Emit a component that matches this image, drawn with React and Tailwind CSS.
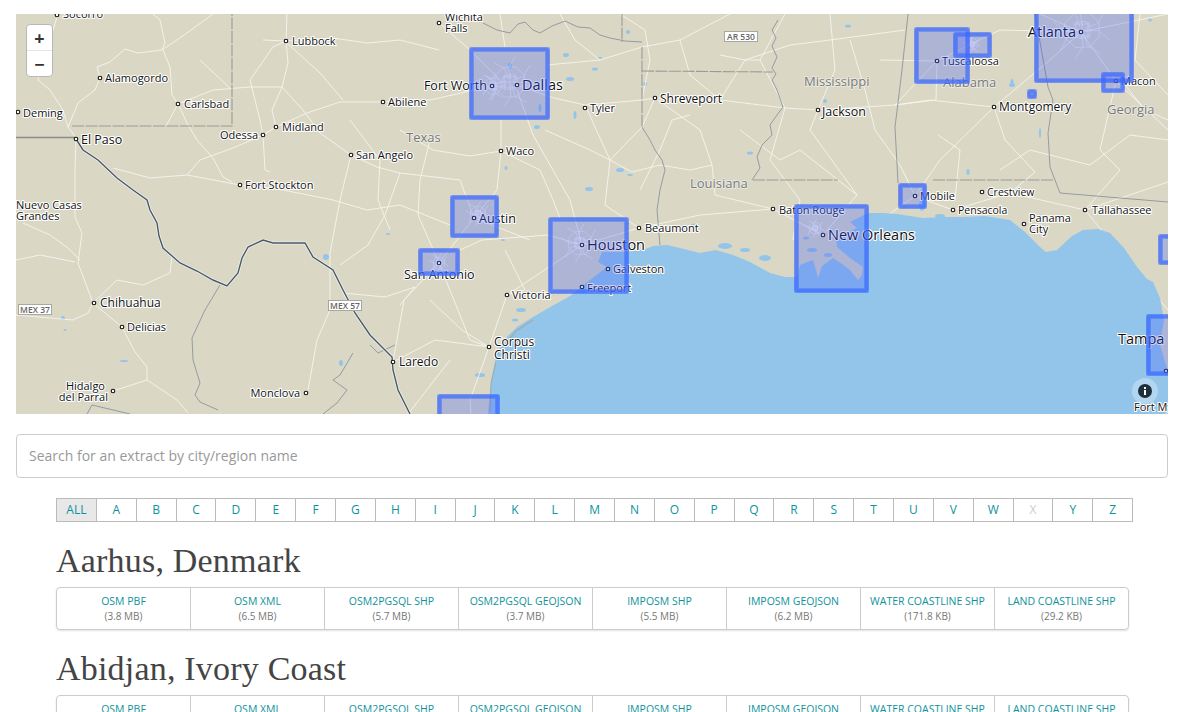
import React from 'react';

const FONT = '"Open Sans", "Liberation Sans", sans-serif';

// map coordinates below are page pixels, viewBox is shifted to match
const GULF =
  'M488,414 L491,380 L497,352 L506,338 L517,327 L533,317 L552,306 L570,296 L590,280 L607,267 L598,262 L602,252 L623,252 L643,250 L653,246 L667,245 L684,249 L700,253 L716,250 L733,255 L750,262 L770,273 L785,277 L797,277 L800,265 L813,260 L816,270 L818,278 L822,266 L833,258 L842,264 L850,270 L858,280 L862,275 L863,267 L850,258 L837,247 L836,238 L857,228 L850,222 L868,213 L883,213 L897,214 L923,218 L945,217 L963,217 L985,216 L1010,220 L1025,232 L1040,247 L1046,252 L1057,250 L1072,236 L1083,230 L1098,229 L1110,233 L1124,248 L1137,267 L1147,279 L1153,282 L1160,298 L1164,320 L1160,345 L1168,372 L1168,414 Z';

const ROADS = [
  'M57,17 L53,30 L38,80 L50,90 L63,110 L68,127 L76,138',
  'M100,78 L97,67 L110,62 L125,49 L138,53 L162,50 L165,43 L160,20 L153,14',
  'M100,78 L95,90 L78,103 L68,127',
  'M162,50 L187,33 L213,14',
  'M163,50 L170,67 L172,95 L178,104 L187,123 L197,140 L213,158 L223,177 L232,182',
  'M178,104 L213,90 L250,87 L282,87',
  'M178,104 L166,126',
  'M250,80 L273,47 L286,41 L287,14',
  'M263,40 L286,41 L333,38 L367,43 L400,40 L439,50',
  'M286,41 L288,63 L282,87 L272,110 L276,127',
  'M287,43 L320,73 L343,100',
  'M250,80 L260,120 L263,135 L265,170 L270,172',
  'M187,175 L200,160 L233,148 L263,135 L276,127 L307,113 L340,102 L383,102 L430,100 L492,86',
  'M113,168 L150,178 L187,175 L240,185 L283,190 L333,200 L367,210 L400,205 L450,225',
  'M282,87 L303,110 L320,133 L351,155 L377,167 L400,173 L460,180 L474,218',
  'M351,155 L340,200 L330,253 L330,310 L317,340 L308,390',
  'M76,139 L75,170 L75,217 L82,233 L78,263 L93,303',
  'M93,303 L117,280 L143,285 L170,273 L172,257',
  'M16,315 L73,320 L88,313 L93,303 L122,327 L135,352 L147,367 L147,380 L177,400 L188,413',
  'M113,391 L147,380',
  'M23,223 L50,235 L68,248 L80,260',
  'M343,293 L385,297 L415,287 L400,305',
  'M517,85 L550,97 L585,105 L642,100 L655,98 L720,100 L785,108 L818,110 L895,105 L930,100 L994,107',
  'M505,47 L500,14',
  'M547,65 L600,60 L642,47 L680,40 L730,14',
  'M501,120 L501,151 L497,190 L474,218 L439,263 L404,300 L393,362',
  'M439,23 L470,50 L500,80',
  'M460,250 L482,240 L548,235 L582,245',
  'M582,245 L639,228 L700,215 L773,209 L823,235',
  'M474,218 L530,240',
  'M582,245 L570,200 L533,135 L517,90',
  'M489,347 L470,340 L439,263',
  'M489,347 L507,295 L582,245',
  'M393,362 L435,340 L489,347 L470,400 L471,414',
  'M655,98 L700,130 L712,165 L715,195 L773,209',
  'M585,105 L610,160 L605,205 L639,228',
  'M655,98 L642,127 L610,160',
  'M818,110 L810,130 L857,195 L823,235',
  'M818,110 L835,70 L830,14',
  'M895,105 L937,61 L1000,30 L1081,32',
  'M994,107 L940,160 L915,196 L860,235',
  'M994,107 L1050,60 L1081,32',
  'M915,196 L953,210 L1010,193 L1085,210 L1168,182',
  'M1081,32 L1116,81 L1100,150 L1120,170 L1085,210',
  'M1116,81 L1168,130',
  'M1085,210 L1130,265 L1168,310',
  'M1081,32 L1168,14',
  'M1081,32 L1040,14',
  'M994,107 L1005,140 L1035,172 L1010,193',
  'M880,60 L937,61 L936,100 L895,105',
  'M760,60 L785,108 L770,160 L800,200 L793,240',
  'M720,100 L745,60 L790,45 L830,40 L905,30',
  'M720,55 L745,60 L760,60 L785,14',
  'M1125,85 L1145,110 L1168,120',
  'M955,200 L960,150 L938,135',
  'M400,130 L433,150 L470,156 L501,151 L540,170 L553,200 L560,218',
  'M610,160 L632,172 L660,165 L690,170 L712,165',
  'M545,130 L590,150 L610,160',
  'M620,14 L645,30 L650,60 L642,100',
  'M680,40 L690,75 L720,100',
  'M690,115 L672,120 L660,150 L640,190',
  'M740,130 L780,160 L800,150 L857,195',
  'M850,40 L865,90 L875,130 L900,165 L915,196',
  'M1000,170 L1030,150 L1090,165 L1130,135 L1168,140',
  'M1140,14 L1135,60 L1168,95',
  'M560,14 L575,40 L600,60',
  'M430,140 L420,180 L418,215 L439,263',
  'M400,173 L385,215 L368,245 L340,265',
  'M430,300 L462,330 L489,347',
  'M505,250 L525,290 L507,295',
  'M408,414 L450,360',
  'M16,260 L40,255 L75,262',
  'M200,60 L232,90',
  'M350,120 L380,160 L378,200 L390,230',
];

const BORDERS_DASHED = [
  'M72,126 L232,126 L232,14',
  'M622,14 L622,42',
  'M642,47 L642,127',
  'M642,71 L773,72',
  'M753,180 L838,180',
  'M933,180 L1053,180',
];

const BORDERS_THIN = [
  'M483,23 L497,30 L510,33 L518,24 L525,22 L533,30 L540,33 L552,26 L565,21 L578,27 L590,28 L600,35 L610,38 L625,41 L642,42',
  'M642,127 L650,140 L655,150 L662,160 L665,170 L660,190 L657,210 L660,245',
  'M778,20 L772,30 L776,38 L772,46 L777,57 L772,68 L776,74 L772,80 L777,90 L783,107 L777,115 L770,125 L772,135 L762,145 L757,157 L760,168 L752,180',
  'M908,14 L902,70 L895,127 L898,183',
  'M1035,14 L1048,87 L1053,100 L1048,133 L1050,167 L1060,193 L1168,202',
  'M220,285 L205,310 L192,338 L193,360 L200,383 L195,395 L200,402 L218,410',
  'M87,414 L92,405 L130,414',
  'M353,353 L340,375 L333,380 L347,390 L337,403 L323,414',
  'M370,345 L378,353 L395,345',
];

const RIO =
  'M76,139 L83,150 L98,160 L117,178 L133,190 L147,200 L150,210 L157,223 L159,236 L163,248 L180,263 L197,271 L213,280 L227,286 L238,273 L242,258 L248,247 L263,240 L273,243 L290,243 L305,243 L313,257 L333,270 L343,290 L355,313 L370,335 L392,357 L393,370 L398,390 L410,414';

const LAKES = [
  [63, 318, 2, 2], [124, 361, 4, 1], [341, 363, 2, 3], [326, 257, 3, 3], [65, 330, 1.5, 1],
  [566, 55, 3, 2], [595, 69, 3, 1.5], [570, 79, 4, 2], [575, 115, 1.5, 4], [620, 170, 4, 2], [630, 175, 3, 1],
  [589, 189, 4, 2], [628, 32, 2, 2], [510, 66, 2, 3], [540, 108, 1.5, 4], [537, 127, 3, 2], [506, 168, 1.5, 2],
  [645, 84, 2, 2], [750, 153, 3, 1.5], [695, 225, 4, 1.5], [725, 246, 7, 3], [745, 250, 5, 2], [765, 258, 6, 3],
  [1012, 85, 3, 2], [1012, 82, 1.5, 3], [825, 101, 2, 2], [848, 26, 3, 1.5], [968, 172, 1.5, 3], [1150, 20, 2, 1.5],
  [1040, 133, 1, 5], [922, 205, 3, 6], [940, 216, 5, 2], [600, 58, 2, 1], [503, 240, 2, 1],
  [521, 310, 5, 2], [515, 320, 3, 1.5], [504, 345, 5, 2], [480, 375, 5, 2], [388, 234, 2, 1],
  [812, 250, 5, 2], [828, 255, 4, 2], [806, 238, 3, 1.5],
];

const LABELS = [
  { d: [57, 15], t: 'Socorro', x: 63, y: 18 },
  { d: [286, 41], t: 'Lubbock', x: 292, y: 45 },
  { d: [100, 78], t: 'Alamogordo', x: 105, y: 82 },
  { d: [178, 104], t: 'Carlsbad', x: 184, y: 108 },
  { d: [18, 112], t: 'Deming', x: 23, y: 117 },
  { d: [76, 139], t: 'El Paso', x: 81, y: 144, s: 12.5 },
  { d: [263, 135], t: 'Odessa', x: 258, y: 139, end: true },
  { d: [276, 127], t: 'Midland', x: 282, y: 131 },
  { d: [383, 102], t: 'Abilene', x: 388, y: 106 },
  { d: [351, 155], t: 'San Angelo', x: 356, y: 159 },
  { d: [240, 185], t: 'Fort Stockton', x: 245, y: 189 },
  { t: 'Nuevo Casas', x: 16, y: 209 },
  { t: 'Grandes', x: 16, y: 220 },
  { d: [94, 303], t: 'Chihuahua', x: 100, y: 307, s: 12 },
  { d: [122, 327], t: 'Delicias', x: 127, y: 331 },
  { t: 'Hidalgo', x: 105, y: 390, end: true },
  { d: [113, 391], t: 'del Parral', x: 108, y: 401, end: true },
  { d: [306, 393], t: 'Monclova', x: 300, y: 397, end: true },
  { d: [393, 362], t: 'Laredo', x: 399, y: 366, s: 12 },
  { d: [439, 23], t: 'Wichita', x: 445, y: 21 },
  { t: 'Falls', x: 445, y: 32 },
  { d: [492, 86], t: 'Fort Worth', x: 487, y: 90, end: true, s: 12.5 },
  { d: [517, 85], t: 'Dallas', x: 522, y: 90, s: 14.5 },
  { d: [585, 108], t: 'Tyler', x: 590, y: 112 },
  { d: [655, 98], t: 'Shreveport', x: 660, y: 103, s: 12 },
  { d: [501, 151], t: 'Waco', x: 506, y: 155 },
  { d: [818, 110], t: 'Jackson', x: 822, y: 116, s: 12.5 },
  { d: [937, 61], t: 'Tuscaloosa', x: 942, y: 65 },
  { d: [994, 107], t: 'Montgomery', x: 999, y: 111, s: 12 },
  { d: [1081, 32], t: 'Atlanta', x: 1076, y: 37, end: true, s: 14.5 },
  { d: [1116, 81], t: 'Macon', x: 1121, y: 85 },
  { d: [915, 196], t: 'Mobile', x: 920, y: 200 },
  { d: [982, 192], t: 'Crestview', x: 987, y: 196, s: 10.5 },
  { d: [953, 210], t: 'Pensacola', x: 958, y: 214, s: 10.5 },
  { d: [1085, 210], t: 'Tallahassee', x: 1092, y: 214 },
  { d: [1024, 224], t: 'Panama', x: 1029, y: 222 },
  { t: 'City', x: 1029, y: 233 },
  { d: [773, 209], t: 'Baton Rouge', x: 779, y: 214 },
  { d: [639, 228], t: 'Beaumont', x: 645, y: 232 },
  { d: [474, 218], t: 'Austin', x: 479, y: 223, s: 12.5 },
  { d: [439, 263], t: 'San Antonio', x: 404, y: 279, s: 12.5 },
  { d: [582, 245], t: 'Houston', x: 587, y: 250, s: 14.5 },
  { d: [608, 269], t: 'Galveston', x: 613, y: 273 },
  { d: [582, 287], t: 'Freeport', x: 587, y: 292 },
  { d: [507, 295], t: 'Victoria', x: 512, y: 299 },
  { d: [489, 347], t: 'Corpus', x: 494, y: 346, s: 12 },
  { t: 'Christi', x: 494, y: 359, s: 12 },
  { d: [823, 235], t: 'New Orleans', x: 828, y: 240, s: 14.5 },
  { t: 'Tampa', x: 1118, y: 344, s: 14.5 },
  { d: [1166, 371], t: 'Fort Myers', x: 1134, y: 411, s: 11 },
];

const STATES = [
  ['Texas', 406, 142],
  ['Louisiana', 690, 188],
  ['Mississippi', 804, 86],
  ['Alabama', 943, 87],
  ['Georgia', 1107, 114],
];

const SHIELDS = [
  ['AR 530', 724, 31, 33],
  ['MEX 37', 18, 304, 33],
  ['MEX 57', 328, 300, 33],
];

// outer edges of each extract box: left, top, right, bottom
const BOXES = [
  [469, 47, 550, 120],
  [450, 195, 499, 238],
  [548, 217, 629, 294],
  [418, 248, 460, 276],
  [437, 394, 500, 420],
  [794, 204, 869, 293],
  [898, 183, 927, 209],
  [914, 27, 970, 84],
  [953, 32, 992, 58],
  [1034, 8, 1134, 83],
  [1101, 72, 1125, 93],
  [1027, 89, 1037, 99],
  [1146, 314, 1180, 376],
  [1158, 234, 1180, 265],
];

// street tangles: centre x, centre y, radius
const CITIES = [
  [510, 82, 26], [493, 86, 14], [580, 243, 20], [439, 263, 10], [478, 214, 13], [1082, 30, 30], [972, 44, 10], [815, 228, 10],
];

function cityPath(cx, cy, r) {
  const at = (deg, k) => {
    const a = (deg * Math.PI) / 180;
    return `${(cx + Math.cos(a) * r * k).toFixed(1)},${(cy + Math.sin(a) * r * k).toFixed(1)}`;
  };
  const spokes = [12, 58, 96, 142, 188, 236, 274, 326]
    .map((deg, i) => `M${at(deg, 0.12)} L${at(deg + (i % 2 ? 12 : -10), 0.55)} L${at(deg + (i % 2 ? -6 : 8), 1)}`)
    .join(' ');
  const ring = (k) => `M${[0, 45, 90, 135, 180, 225, 270, 315].map((deg) => at(deg + 20, k)).join(' L')} Z`;
  const grid = [-0.2, 0, 0.2]
    .map((k) => `M${cx - r * 0.3},${cy + r * k} H${cx + r * 0.3} M${cx + r * k},${cy - r * 0.3} V${cy + r * 0.3}`)
    .join(' ');
  return `${spokes} ${ring(0.3)} ${ring(0.62)} ${grid}`;
}

function MapSvg() {
  return (
    <svg viewBox="16 14 1152 400" className="block w-full h-full" style={{ fontFamily: FONT }}>
      <rect x="16" y="14" width="1152" height="400" fill="#dad7c4" />
      <g fill="#93c5ea">
        {LAKES.map(([cx, cy, rx, ry], i) => (
          <ellipse key={i} cx={cx} cy={cy} rx={rx} ry={ry} />
        ))}
      </g>
      <g fill="none" stroke="#f6f5ee" strokeWidth="0.9" strokeLinejoin="round">
        {ROADS.map((d, i) => (
          <path key={i} d={d} />
        ))}
      </g>
      <path d={GULF} fill="#93c5ea" />
      <path d="M497,355 L516,331 L533,320" fill="none" stroke="#a5a9a6" strokeWidth="1.2" />
      <path d="M490,412 L491,384 L496,362" fill="none" stroke="#a5a9a6" strokeWidth="1" />
      <g fill="none" stroke="#9a9b96" strokeWidth="1.1" strokeDasharray="12 1.5">
        {BORDERS_DASHED.map((d, i) => (
          <path key={i} d={d} />
        ))}
      </g>
      <g fill="none" stroke="#8c959c" strokeWidth="0.9">
        {BORDERS_THIN.map((d, i) => (
          <path key={i} d={d} />
        ))}
      </g>
      <path d="M16,137.5 L76,137.5" fill="none" stroke="#8b8d8c" strokeWidth="1.6" />
      <path d={RIO} fill="none" stroke="#f0efe6" strokeWidth="3" />
      <path d={RIO} fill="none" stroke="#47596b" strokeWidth="1.4" />
      <g fill="none" stroke="#fbfbff" strokeWidth="0.6" opacity="0.9">
        {CITIES.map(([cx, cy, r], i) => (
          <path key={i} d={cityPath(cx, cy, r)} />
        ))}
      </g>
      {STATES.map(([t, x, y]) => (
        <text key={t} x={x} y={y} fontSize="13" fill="#77787a" stroke="#eeede4" strokeWidth="1.5" paintOrder="stroke">
          {t}
        </text>
      ))}
      {SHIELDS.map(([t, x, y, w]) => (
        <g key={t}>
          <rect x={x + 0.5} y={y + 0.5} width={w} height="10" fill="#fff" stroke="#a8a8a0" />
          <text x={x + w / 2 + 0.5} y={y + 9} textAnchor="middle" fontSize="8.5" fontWeight="600" fill="#666">
            {t}
          </text>
        </g>
      ))}
      {LABELS.map((l) => (
        <g key={l.t}>
          {l.d && <circle cx={l.d[0]} cy={l.d[1]} r="1.8" fill="#fff" stroke="#111" strokeWidth="1.1" />}
          <text
            x={l.x}
            y={l.y}
            fontSize={l.s || 11}
            fontWeight="500"
            textAnchor={l.end ? 'end' : 'start'}
            fill="#111"
            stroke="#fff"
            strokeWidth="2.2"
            strokeLinejoin="round"
            paintOrder="stroke"
          >
            {l.t}
          </text>
        </g>
      ))}
      {BOXES.map(([l, t, r, b]) => (
        <g key={`${l}-${t}`}>
          <rect x={l} y={t} width={r - l} height={b - t} rx="1.5" fill="#3c5aff" fillOpacity="0.28" />
          <rect x={l + 2.5} y={t + 2.5} width={r - l - 5} height={b - t - 5} rx="1" fill="none" stroke="#3a6bff" strokeOpacity="0.45" strokeWidth="5" />
          <rect x={l + 2.5} y={t + 2.5} width={r - l - 5} height={b - t - 5} rx="1" fill="none" stroke="#3a6bff" strokeOpacity="0.45" strokeWidth="3.2" />
        </g>
      ))}
    </svg>
  );
}

const LETTERS = ['ALL', 'A', 'B', 'C', 'D', 'E', 'F', 'G', 'H', 'I', 'J', 'K', 'L', 'M', 'N', 'O', 'P', 'Q', 'R', 'S', 'T', 'U', 'V', 'W', 'X', 'Y', 'Z'];

const FORMATS = ['OSM PBF', 'OSM XML', 'OSM2PGSQL SHP', 'OSM2PGSQL GEOJSON', 'IMPOSM SHP', 'IMPOSM GEOJSON', 'WATER COASTLINE SHP', 'LAND COASTLINE SHP'];

const EXTRACTS = [
  { name: 'Aarhus, Denmark', sizes: ['3.8 MB', '6.5 MB', '5.7 MB', '3.7 MB', '5.5 MB', '6.2 MB', '171.8 KB', '29.2 KB'] },
  { name: 'Abidjan, Ivory Coast', sizes: ['1.7 MB', '3.1 MB', '2.4 MB', '1.6 MB', '2.3 MB', '2.6 MB', '210.4 KB', '33.1 KB'] },
];

function Extract({ name, sizes }) {
  return (
    <div>
      <h2 className="h-[46px] pt-[2px] text-[34px] leading-[46px] text-[#444] font-['Liberation_Serif',serif] tracking-[0.2px]">{name}</h2>
      <div className="mt-[5px] w-[1073px] h-[43px] flex rounded-[4px] border border-[#ccc] shadow-[0_1px_2px_rgba(0,0,0,0.12)]">
        {FORMATS.map((f, i) => (
          <div key={f} className="flex-1 border-r border-[#ccc] last:border-r-0 text-center pt-[6px]">
            <div className="text-[10.5px] leading-[15px] text-[#0e939c]">{f}</div>
            <div className="text-[10px] leading-[15px] text-[#777]">({sizes[i]})</div>
          </div>
        ))}
      </div>
    </div>
  );
}

export default function App() {
  return (
    <div className="h-[712px] overflow-hidden bg-white pl-4 pr-5 pt-[14px] font-['Open_Sans','Liberation_Sans',sans-serif]">
      <div className="relative h-[400px] overflow-hidden">
        <MapSvg />
        <div className="absolute left-[10px] top-[10px] w-[27px] rounded-[4px] border border-[#b8b8b8] bg-white text-[#333]">
          <div className="h-[26px] flex items-center justify-center border-b border-[#e5e5e5] text-[18px] font-bold leading-none">+</div>
          <div className="h-[25px] flex items-center justify-center text-[18px] font-bold leading-none">−</div>
        </div>
        <div className="absolute left-[1116px] top-[364px] w-[26px] h-[26px] rounded-full bg-white/30 flex items-center justify-center">
          <svg width="14" height="14" viewBox="0 0 14 14">
            <circle cx="7" cy="7" r="7" fill="#1f2f3a" />
            <rect x="6" y="6" width="2" height="5" fill="#fff" />
            <rect x="6" y="3" width="2" height="2" fill="#fff" />
          </svg>
        </div>
      </div>

      <input
        placeholder="Search for an extract by city/region name"
        className="block w-full h-[44px] mt-5 px-3 pb-[2px] rounded-[4px] border border-[#ccc] text-sm text-[#555] placeholder:text-[#999] outline-none"
      />

      <div className="ml-10 mt-5 w-[1077px] h-6 flex border border-[#bbb]">
        {LETTERS.map((l) => (
          <div
            key={l}
            className={`flex-1 flex items-center justify-center border-r border-[#bbb] last:border-r-0 text-xs ${
              l === 'ALL' ? 'bg-[#e8e8e8] text-[#0e939c]' : l === 'X' ? 'text-[#ccc]' : 'text-[#0e939c]'
            }`}
          >
            {l}
          </div>
        ))}
      </div>

      <div className="ml-10 mt-[14px] flex flex-col gap-[14px]">
        {EXTRACTS.map((e) => (
          <Extract key={e.name} {...e} />
        ))}
      </div>
    </div>
  );
}
